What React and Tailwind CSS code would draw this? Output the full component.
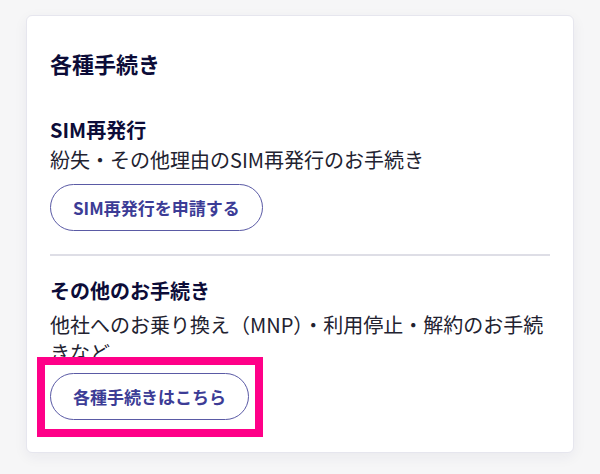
import React from 'react';

const font = { fontFamily: '"Noto Sans CJK JP", "Noto Sans", sans-serif' };

const OutlineButton = ({ children }) => (
  <button
    type="button"
    className="inline-flex h-[47px] items-center rounded-full border-[1.5px] border-[#5a5aa5] bg-white px-[22px] text-[17px] font-bold text-[#3c3c96]"
  >
    {children}
  </button>
);

const App = () => {
  return (
    <div className="min-h-[474px] bg-[#f6f6f7] pt-[15px] pl-[26px]" style={font}>
      <div className="w-[548px] rounded-[6px] border border-[#e6e6ee] bg-white px-[23px] pt-8 pb-[32px] shadow-[0_4px_14px_rgba(40,40,80,0.06)]">
        <h2 className="text-[22px] leading-[30px] font-bold text-[#0c0c38]">各種手続き</h2>

        {/* SIM再発行 */}
        <div className="mt-[38px]">
          <h3 className="text-[20px] leading-[28px] font-bold text-[#0c0c38]">SIM再発行</h3>
          <p className="mt-[2px] text-[20px] leading-[28px] text-[#222230]">
            紛失・その他理由のSIM再発行のお手続き
          </p>
          <div className="mt-[10px]">
            <OutlineButton>SIM再発行を申請する</OutlineButton>
          </div>
        </div>

        <div className="mt-[23px] h-[2px] bg-[#dedee6]" />

        {/* その他 */}
        <div className="mt-[21px]">
          <h3 className="text-[20px] leading-[28px] font-bold text-[#0c0c38]">その他のお手続き</h3>
          <p className="mt-[6px] text-[20px] leading-[28px] text-[#222230]">
            他社へのお乗り換え（MNP）・利用停止・解約のお手続きなど
          </p>
          <div className="relative mt-[6px] inline-block">
            <OutlineButton>各種手続きはこちら</OutlineButton>
            <div className="pointer-events-none absolute -top-[16px] -right-[14px] -bottom-[17px] -left-[13px] border-[8px] border-[#ff0088]" />
          </div>
        </div>
      </div>
    </div>
  );
};

export default App;
